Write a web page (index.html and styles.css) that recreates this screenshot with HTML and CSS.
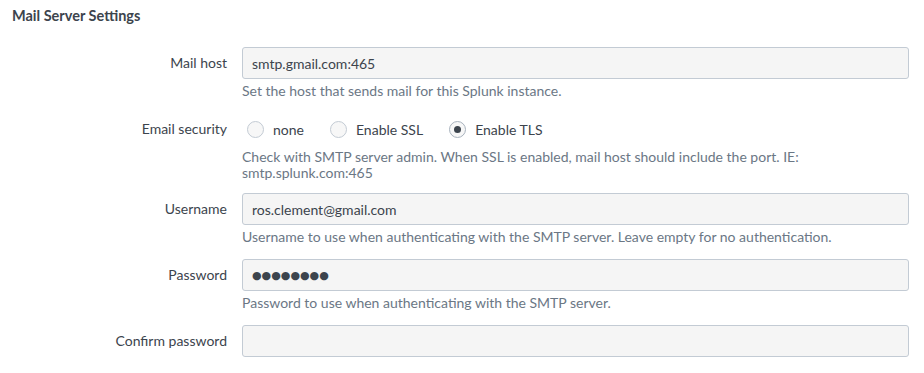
FILE: index.html
```html
<!DOCTYPE html>
<html lang="en">
<head>
    <meta charset="UTF-8">
    <meta name="viewport" content="width=device-width, initial-scale=1.0">
    <title>Mail Server Settings</title>
    <link rel="stylesheet" href="styles.css">
</head>
<body>
    <div class="settings">
        <h2 class="section-title">Mail Server Settings</h2>

        <div class="field">
            <label class="field-label" for="mailHost">Mail host</label>
            <div class="field-control">
                <input class="text-input" id="mailHost" type="text" value="smtp.gmail.com:465">
                <p class="help">Set the host that sends mail for this Splunk instance.</p>
            </div>
        </div>

        <div class="field">
            <span class="field-label">Email security</span>
            <div class="field-control">
                <div class="radio-group">
                    <label class="radio"><span class="radio-dot"></span>none</label>
                    <label class="radio"><span class="radio-dot"></span>Enable SSL</label>
                    <label class="radio"><span class="radio-dot checked"></span>Enable TLS</label>
                </div>
                <p class="help multi">Check with SMTP server admin. When SSL is enabled, mail host should include the port. IE:<br>smtp.splunk.com:465</p>
            </div>
        </div>

        <div class="field">
            <label class="field-label" for="username">Username</label>
            <div class="field-control">
                <input class="text-input" id="username" type="text" value="ros.clement@gmail.com">
                <p class="help">Username to use when authenticating with the SMTP server. Leave empty for no authentication.</p>
            </div>
        </div>

        <div class="field">
            <label class="field-label" for="password">Password</label>
            <div class="field-control">
                <div class="text-input password" id="password">&#9679;&#9679;&#9679;&#9679;&#9679;&#9679;&#9679;&#9679;</div>
                <p class="help">Password to use when authenticating with the SMTP server.</p>
            </div>
        </div>

        <div class="field">
            <label class="field-label" for="confirm">Confirm password</label>
            <div class="field-control">
                <input class="text-input" id="confirm" type="password" value="">
            </div>
        </div>
    </div>
</body>
</html>
```

FILE: styles.css
```css
body {
    margin: 0;
    background-color: #fff;
    font-family: Lato, "Open Sans", sans-serif;
    font-size: 14px;
    color: #3c444d;
}

.settings {
    padding: 6px 15px 0 12px;
}

.section-title {
    margin: 0 0 21px;
    font-size: 14.5px;
    line-height: 20px;
    font-weight: bold;
    color: #3c444d;
}

.field {
    display: grid;
    grid-template-columns: 215px 1fr;
    column-gap: 15px;
}

.field-label {
    text-align: right;
    line-height: 32px;
}

.field-control {
    display: flex;
    flex-direction: column;
}

.text-input {
    box-sizing: border-box;
    height: 32px;
    width: 100%;
    margin: 0;
    padding: 0 9px;
    border: 1px solid #c3cbd4;
    border-radius: 3px;
    background-color: #f5f5f5;
    font-family: inherit;
    font-size: 14px;
    color: #3c444d;
    outline: none;
}

.password {
    display: flex;
    align-items: center;
    font-family: "DejaVu Sans", sans-serif;
    font-size: 11px;
    letter-spacing: 0;
}

.help {
    margin: 4px 0 14px;
    line-height: 16px;
    color: #6b7785;
}

.help.multi {
    margin-bottom: 12px;
}

.radio-group {
    display: flex;
    align-items: center;
    height: 32px;
    gap: 26px;
    padding-left: 5px;
}

.radio {
    display: flex;
    align-items: center;
    gap: 9px;
}

.radio-dot {
    box-sizing: border-box;
    width: 17px;
    height: 17px;
    border: 1px solid #c3cbd4;
    border-radius: 50%;
    background-color: #f7f7f7;
    display: flex;
    align-items: center;
    justify-content: center;
}

.radio-dot.checked {
    border-color: #a8b2bd;
}

.radio-dot.checked::after {
    content: "";
    width: 7px;
    height: 7px;
    border-radius: 50%;
    background-color: #3c444d;
}
```
